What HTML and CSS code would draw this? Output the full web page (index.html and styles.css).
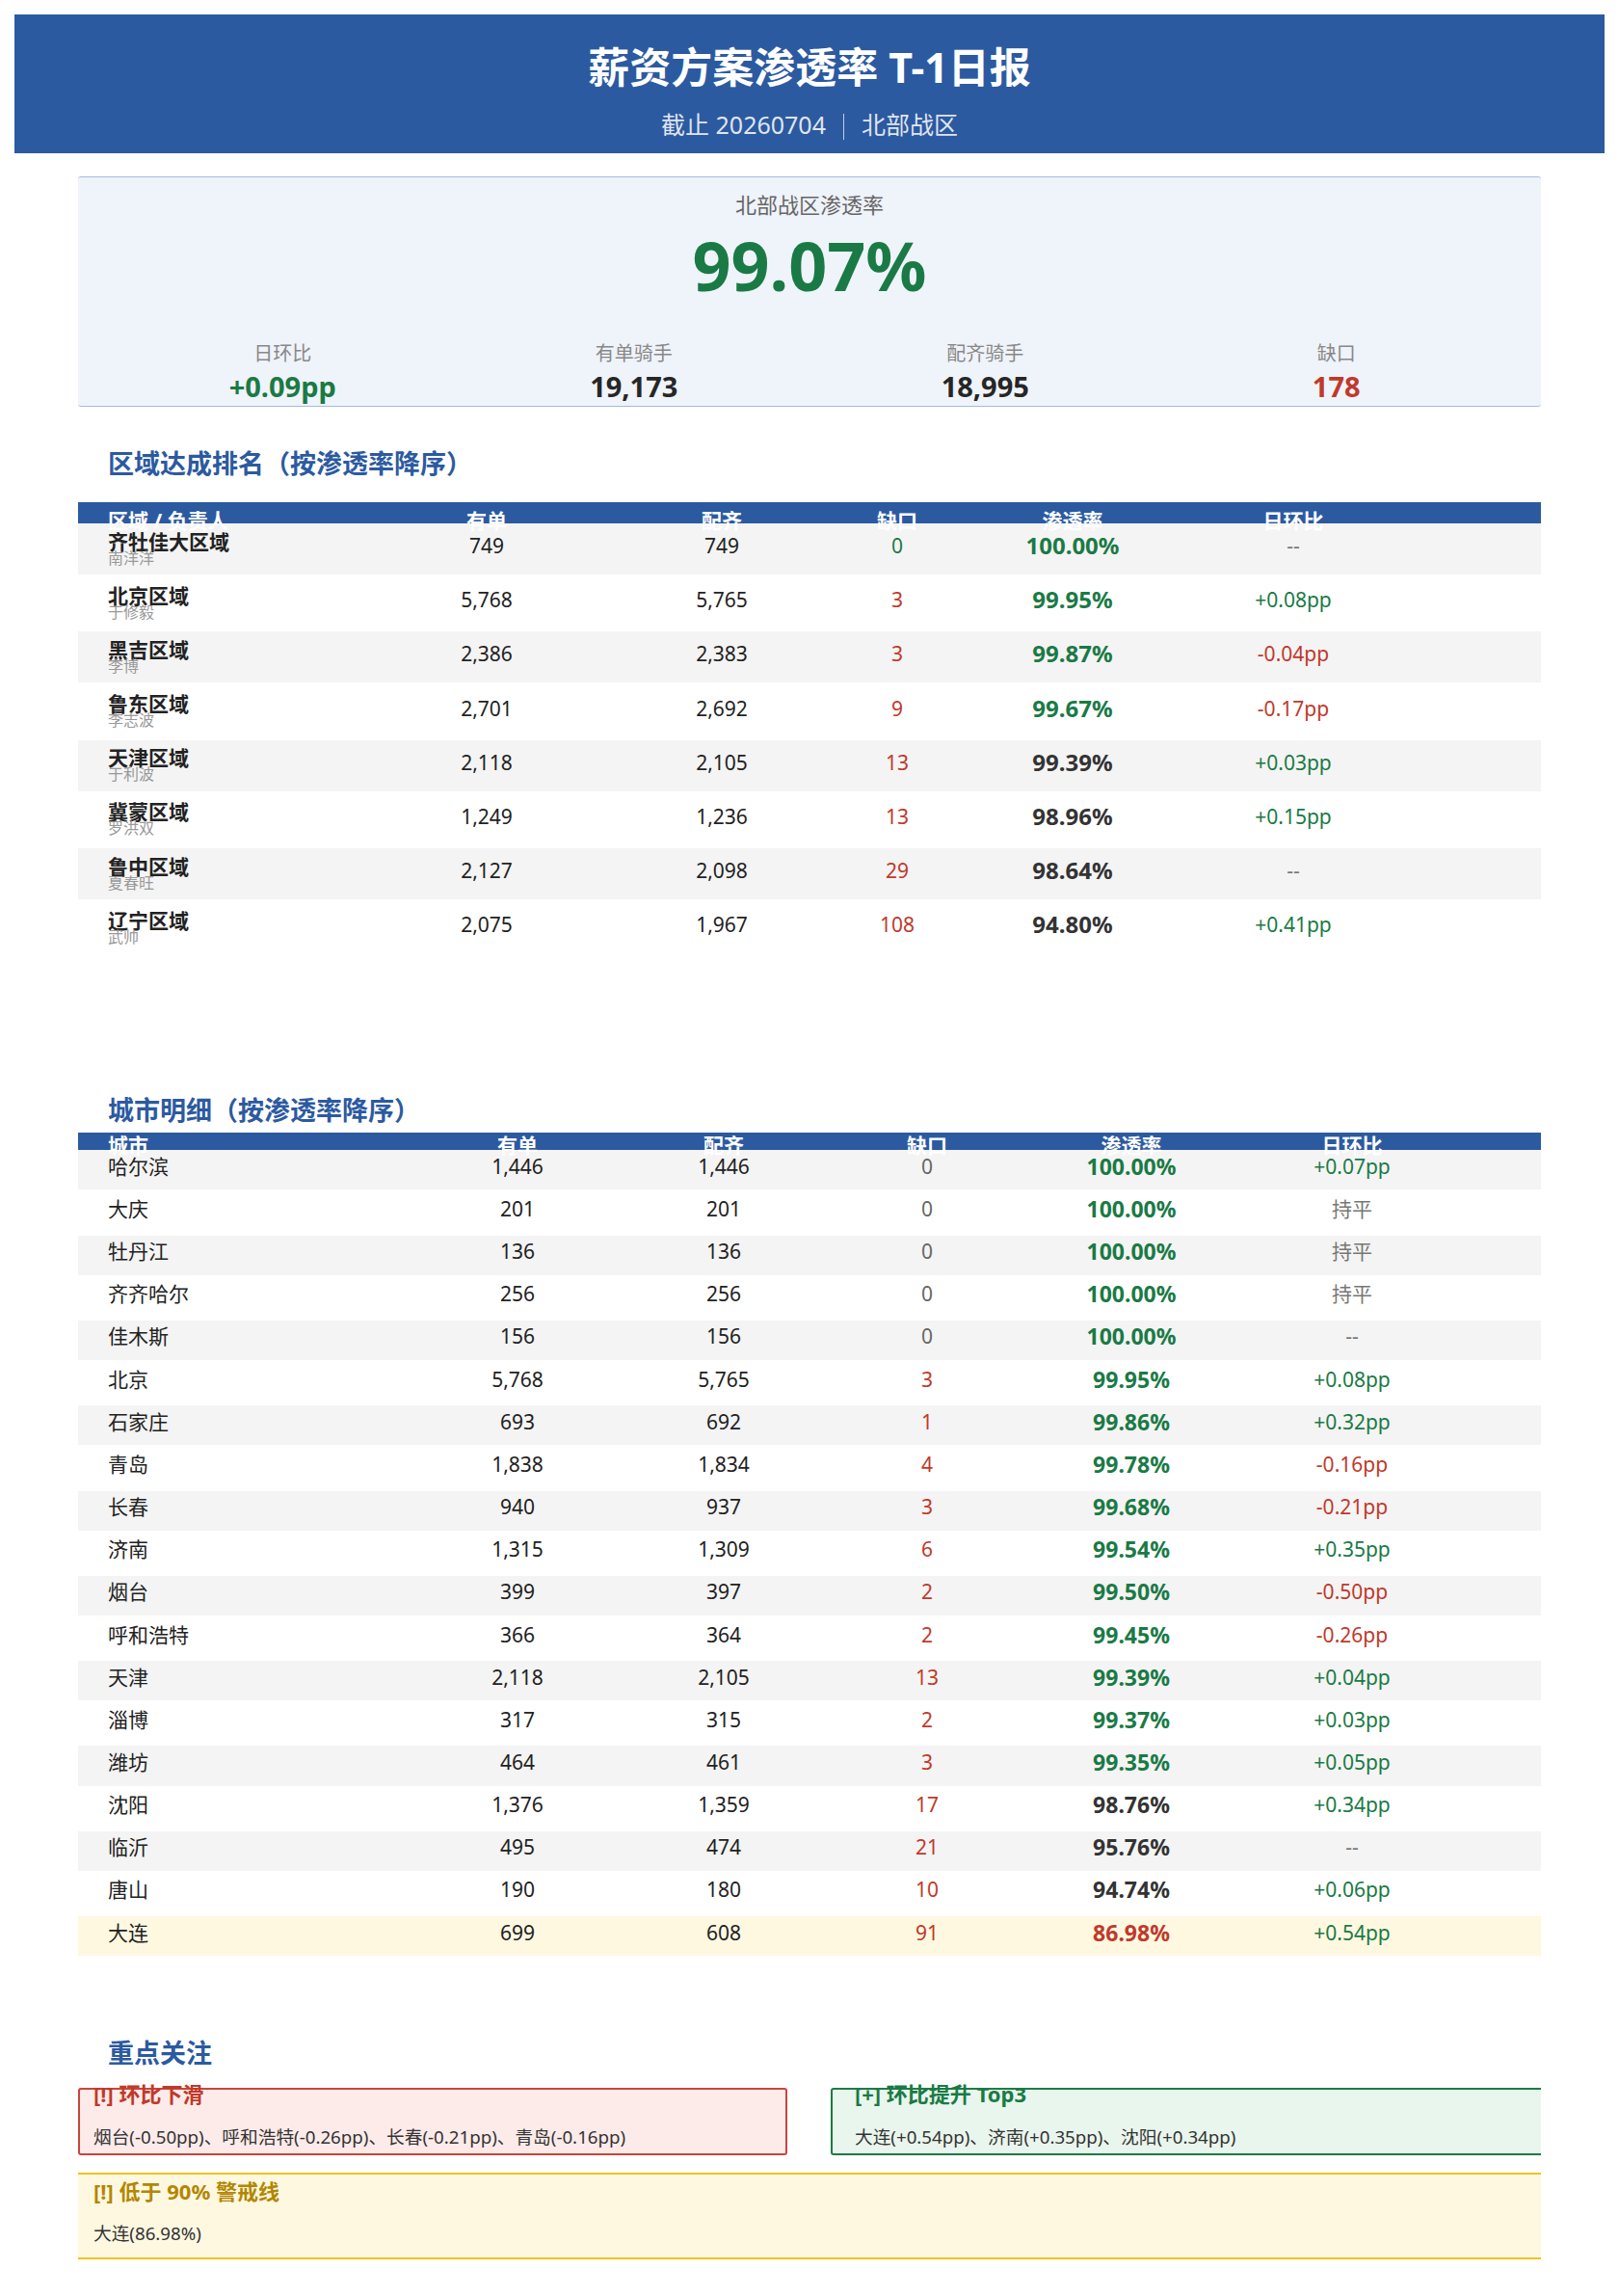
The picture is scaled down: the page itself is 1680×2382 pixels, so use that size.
FILE: index.html
```html
<!DOCTYPE html>
<html lang="zh-CN">
<head>
<meta charset="utf-8">
<title>薪资方案渗透率 T-1日报</title>
<link rel="stylesheet" href="styles.css">
</head>
<body>
<header class="top">
  <h1 class="title">薪资方案渗透率 T-1日报</h1>
  <div class="sub">截止 20260704<span class="sep"></span>北部战区</div>
</header>

<main class="wrap">
  <section class="kpi">
    <div class="kpi-label">北部战区渗透率</div>
    <div class="kpi-big">99.07%</div>
    <div class="kpi-grid">
      <div><div class="kpi-k">日环比</div><div class="kpi-v up">+0.09pp</div></div>
      <div><div class="kpi-k">有单骑手</div><div class="kpi-v">19,173</div></div>
      <div><div class="kpi-k">配齐骑手</div><div class="kpi-v">18,995</div></div>
      <div><div class="kpi-k">缺口</div><div class="kpi-v down">178</div></div>
    </div>
  </section>

  <h2 class="sec sec-region">区域达成排名（按渗透率降序）</h2>
  <div class="rtable">
    <div class="rhead">
      <div class="c1">区域 / 负责人</div><div>有单</div><div>配齐</div><div>缺口</div><div>渗透率</div><div>日环比</div><div></div>
    </div>
    <div class="rbody">
      <div class="rrow"><div class="c1 name"><span class="nm">齐牡佳大区域</span><span class="pn">南洋洋</span></div><div>749</div><div>749</div><div class="up">0</div><div class="pct up">100.00%</div><div class="na">--</div><div></div></div>
      <div class="rrow"><div class="c1 name"><span class="nm">北京区域</span><span class="pn">于修毅</span></div><div>5,768</div><div>5,765</div><div class="down">3</div><div class="pct up">99.95%</div><div class="up">+0.08pp</div><div></div></div>
      <div class="rrow"><div class="c1 name"><span class="nm">黑吉区域</span><span class="pn">李博</span></div><div>2,386</div><div>2,383</div><div class="down">3</div><div class="pct up">99.87%</div><div class="down">-0.04pp</div><div></div></div>
      <div class="rrow"><div class="c1 name"><span class="nm">鲁东区域</span><span class="pn">李志波</span></div><div>2,701</div><div>2,692</div><div class="down">9</div><div class="pct up">99.67%</div><div class="down">-0.17pp</div><div></div></div>
      <div class="rrow"><div class="c1 name"><span class="nm">天津区域</span><span class="pn">于利波</span></div><div>2,118</div><div>2,105</div><div class="down">13</div><div class="pct">99.39%</div><div class="up">+0.03pp</div><div></div></div>
      <div class="rrow"><div class="c1 name"><span class="nm">冀蒙区域</span><span class="pn">罗洪双</span></div><div>1,249</div><div>1,236</div><div class="down">13</div><div class="pct">98.96%</div><div class="up">+0.15pp</div><div></div></div>
      <div class="rrow"><div class="c1 name"><span class="nm">鲁中区域</span><span class="pn">夏春旺</span></div><div>2,127</div><div>2,098</div><div class="down">29</div><div class="pct">98.64%</div><div class="na">--</div><div></div></div>
      <div class="rrow"><div class="c1 name"><span class="nm">辽宁区域</span><span class="pn">武帅</span></div><div>2,075</div><div>1,967</div><div class="down">108</div><div class="pct">94.80%</div><div class="up">+0.41pp</div><div></div></div>
    </div>
  </div>

  <h2 class="sec sec-city">城市明细（按渗透率降序）</h2>
  <div class="ctable">
    <div class="chead">
      <div class="c1">城市</div><div>有单</div><div>配齐</div><div>缺口</div><div>渗透率</div><div>日环比</div><div></div>
    </div>
    <div class="cbody">
      <div class="crow"><div class="c1">哈尔滨</div><div>1,446</div><div>1,446</div><div class="zero">0</div><div class="pct up">100.00%</div><div class="up">+0.07pp</div><div></div></div>
      <div class="crow"><div class="c1">大庆</div><div>201</div><div>201</div><div class="zero">0</div><div class="pct up">100.00%</div><div class="flat">持平</div><div></div></div>
      <div class="crow"><div class="c1">牡丹江</div><div>136</div><div>136</div><div class="zero">0</div><div class="pct up">100.00%</div><div class="flat">持平</div><div></div></div>
      <div class="crow"><div class="c1">齐齐哈尔</div><div>256</div><div>256</div><div class="zero">0</div><div class="pct up">100.00%</div><div class="flat">持平</div><div></div></div>
      <div class="crow"><div class="c1">佳木斯</div><div>156</div><div>156</div><div class="zero">0</div><div class="pct up">100.00%</div><div class="na">--</div><div></div></div>
      <div class="crow"><div class="c1">北京</div><div>5,768</div><div>5,765</div><div class="down">3</div><div class="pct up">99.95%</div><div class="up">+0.08pp</div><div></div></div>
      <div class="crow"><div class="c1">石家庄</div><div>693</div><div>692</div><div class="down">1</div><div class="pct up">99.86%</div><div class="up">+0.32pp</div><div></div></div>
      <div class="crow"><div class="c1">青岛</div><div>1,838</div><div>1,834</div><div class="down">4</div><div class="pct up">99.78%</div><div class="down">-0.16pp</div><div></div></div>
      <div class="crow"><div class="c1">长春</div><div>940</div><div>937</div><div class="down">3</div><div class="pct up">99.68%</div><div class="down">-0.21pp</div><div></div></div>
      <div class="crow"><div class="c1">济南</div><div>1,315</div><div>1,309</div><div class="down">6</div><div class="pct up">99.54%</div><div class="up">+0.35pp</div><div></div></div>
      <div class="crow"><div class="c1">烟台</div><div>399</div><div>397</div><div class="down">2</div><div class="pct up">99.50%</div><div class="down">-0.50pp</div><div></div></div>
      <div class="crow"><div class="c1">呼和浩特</div><div>366</div><div>364</div><div class="down">2</div><div class="pct up">99.45%</div><div class="down">-0.26pp</div><div></div></div>
      <div class="crow"><div class="c1">天津</div><div>2,118</div><div>2,105</div><div class="down">13</div><div class="pct up">99.39%</div><div class="up">+0.04pp</div><div></div></div>
      <div class="crow"><div class="c1">淄博</div><div>317</div><div>315</div><div class="down">2</div><div class="pct up">99.37%</div><div class="up">+0.03pp</div><div></div></div>
      <div class="crow"><div class="c1">潍坊</div><div>464</div><div>461</div><div class="down">3</div><div class="pct up">99.35%</div><div class="up">+0.05pp</div><div></div></div>
      <div class="crow"><div class="c1">沈阳</div><div>1,376</div><div>1,359</div><div class="down">17</div><div class="pct">98.76%</div><div class="up">+0.34pp</div><div></div></div>
      <div class="crow"><div class="c1">临沂</div><div>495</div><div>474</div><div class="down">21</div><div class="pct">95.76%</div><div class="na">--</div><div></div></div>
      <div class="crow"><div class="c1">唐山</div><div>190</div><div>180</div><div class="down">10</div><div class="pct">94.74%</div><div class="up">+0.06pp</div><div></div></div>
      <div class="crow warn"><div class="c1">大连</div><div>699</div><div>608</div><div class="down">91</div><div class="pct down">86.98%</div><div class="up">+0.54pp</div><div></div></div>
    </div>
  </div>

  <h2 class="sec sec-focus">重点关注</h2>
  <div class="alerts">
    <div class="box box-red">
      <div class="box-t">[!] 环比下滑</div>
      <div class="box-b">烟台(-0.50pp)、呼和浩特(-0.26pp)、长春(-0.21pp)、青岛(-0.16pp)</div>
    </div>
    <div class="box box-green">
      <div class="box-t">[+] 环比提升 Top3</div>
      <div class="box-b">大连(+0.54pp)、济南(+0.35pp)、沈阳(+0.34pp)</div>
    </div>
  </div>
  <div class="box-y">
    <div class="box-t">[!] 低于 90% 警戒线</div>
    <div class="box-b">大连(86.98%)</div>
  </div>
</main>
</body>
</html>
```

FILE: styles.css
```css
html, body {
  margin: 0;
  background: #ffffff;
}
body {
  padding: 15px 0 0;
  font-family: "Noto Sans", "Noto Sans CJK SC", sans-serif;
  color: #333333;
}

/* ---------- header ---------- */
.top {
  margin: 0 15px;
  height: 144px;
  box-sizing: border-box;
  padding-top: 30px;
  background: #2c5aa0;
  color: #ffffff;
  text-align: center;
}
.title {
  margin: 0;
  font-size: 43px;
  font-weight: 700;
  line-height: 50px;
}
.sub {
  margin-top: 19px;
  font-size: 25px;
  line-height: 30px;
  color: rgba(255, 255, 255, 0.86);
}
.sep {
  display: inline-block;
  width: 1px;
  height: 27px;
  margin: 0 18px;
  background: rgba(255, 255, 255, 0.7);
  vertical-align: -6px;
}

/* ---------- main column ---------- */
.wrap {
  width: 1518px;
  margin: 0 auto;
  overflow: hidden;
  padding-bottom: 38px;
}

/* ---------- KPI card ---------- */
.kpi {
  margin-top: 24px;
  background: #eff3fa;
  border-top: 1px solid #a7badb;
  border-bottom: 1px solid #a7badb;
  border-radius: 3px;
  padding: 14px 30px 2px;
  text-align: center;
}
.kpi-label {
  font-size: 22px;
  line-height: 28px;
  color: #666666;
}
.kpi-big {
  margin-top: 7px;
  font-size: 70px;
  font-weight: 700;
  line-height: 84px;
  color: #1a7a45;
}
.kpi-grid {
  display: grid;
  grid-template-columns: repeat(4, 1fr);
  margin-top: 37px;
}
.kpi-k {
  font-size: 20px;
  line-height: 26px;
  color: #888888;
}
.kpi-v {
  margin-top: 3px;
  font-size: 29px;
  font-weight: 700;
  line-height: 36px;
  color: #262626;
}

/* ---------- section titles ---------- */
.sec {
  margin: 0;
  padding-left: 31px;
  font-size: 27px;
  font-weight: 700;
  line-height: 34px;
  color: #2c5aa0;
}
.sec-region { margin: 42px 0 23px; }
.sec-city { margin: 143px 0 6px; }
.sec-focus { margin: 81px 0 19px; }

/* ---------- shared colours ---------- */
.up { color: #1a7a45; }
.down { color: #c0392b; }
.na { color: #777777; }
.flat { color: #777777; }
.zero { color: #666666; }

.c1 { text-align: left; padding-left: 31px; }

/* ---------- region table ---------- */
.rhead, .rrow {
  display: grid;
  grid-template-columns: 302px 244px 244px 120px 244px 214px 1fr;
  text-align: center;
}
.rhead {
  height: 22px;
  box-sizing: border-box;
  padding-top: 8px;
  background: #2c5aa0;
  color: #ffffff;
  font-size: 21px;
  font-weight: 700;
  line-height: 22px;
}
.rrow {
  height: 56.17px;
  box-sizing: border-box;
  border-bottom: 3px solid #ffffff;
  padding-bottom: 7px;
  align-items: center;
  font-size: 21px;
  line-height: 24px;
  color: #222222;
}
.rbody .rrow:nth-child(odd) { background: #f4f4f4; }
.name {
  padding-top: 6px;
}
.nm {
  display: block;
  font-weight: 700;
  line-height: 20px;
  color: #222222;
}
.pn {
  display: block;
  font-size: 16px;
  line-height: 15px;
  color: #999999;
}
.rrow .pct {
  font-size: 24px;
  font-weight: 700;
}
.rrow .pct:not(.up) { color: #333333; }

/* ---------- city table ---------- */
.chead, .crow {
  display: grid;
  grid-template-columns: 349px 214px 214px 208px 216px 242px 1fr;
  text-align: center;
}
.chead {
  height: 18px;
  box-sizing: border-box;
  padding-top: 2px;
  background: #2c5aa0;
  color: #ffffff;
  font-size: 21px;
  font-weight: 700;
  line-height: 22px;
}
.crow {
  height: 44.17px;
  box-sizing: border-box;
  border-bottom: 3px solid #ffffff;
  padding-bottom: 8px;
  align-items: center;
  font-size: 21px;
  line-height: 24px;
  color: #222222;
}
.cbody .crow:nth-child(odd) { background: #f4f4f4; }
.cbody .crow.warn { background: #fef8e1; }
.crow .pct {
  font-size: 23px;
  font-weight: 700;
}
.crow .pct:not(.up):not(.down) { color: #333333; }

/* ---------- focus boxes ---------- */
.alerts {
  display: flex;
  gap: 45px;
}
.box {
  box-sizing: border-box;
  border: 2px solid;
  border-radius: 3px;
  padding-bottom: 5px;
  flex: 0 0 auto;
}
.box-red {
  width: 736px;
  border-color: #c9453b;
  background: #fdebea;
  padding-left: 14px;
  padding-right: 14px;
}
.box-red .box-t { color: #c0392b; }
.box-green {
  width: 760px;
  border-color: #1f7a45;
  background: #e9f6ed;
  padding-left: 23px;
  padding-right: 23px;
}
.box-green .box-t { color: #1a7a45; }
.box-t {
  margin-top: -9px;
  font-size: 22px;
  font-weight: 700;
  line-height: 26px;
}
.box-b {
  margin-top: 20px;
  font-size: 18.7px;
  line-height: 24px;
  color: #333333;
}
.box-y {
  margin-top: 18px;
  border-top: 2px solid #f2c21b;
  border-bottom: 2px solid #f2c21b;
  background: #fef8e1;
  padding: 4px 16px 13px;
}
.box-y .box-t {
  margin-top: 0;
  color: #b38600;
}
.box-y .box-b { margin-top: 19px; }
```
